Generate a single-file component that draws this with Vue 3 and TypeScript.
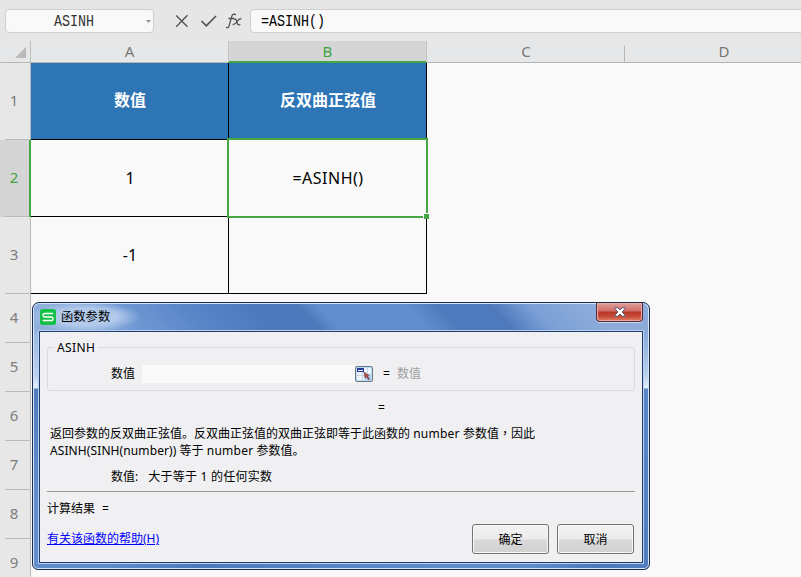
<script setup lang="ts">
import { ref } from 'vue'

interface Row {
  id: number
  height: number
}

const columns: string[] = ['A', 'B', 'C', 'D']
const rows: Row[] = [
  { id: 1, height: 77 },
  { id: 2, height: 77 },
  { id: 3, height: 77 },
  { id: 4, height: 49 },
  { id: 5, height: 49 },
  { id: 6, height: 49 },
  { id: 7, height: 49 },
  { id: 8, height: 49 },
  { id: 9, height: 49 },
]
const cells: string[][] = [
  ['数值', '反双曲正弦值'],
  ['1', '=ASINH()'],
  ['-1', ''],
]
const open = ref(true)
</script>

<template>
  <div class="app">
    <header class="formula-bar">
      <div class="name-box">
        <span class="mono">ASINH</span>
        <svg class="caret" width="5" height="3" viewBox="0 0 5 3"><path d="M0 0h5L2.5 3z" fill="#8f8f8f" /></svg>
      </div>
      <svg class="tools" width="69" height="18" viewBox="0 0 69 18" fill="none" stroke="#505050" stroke-width="1.3">
        <path d="M1.2 3.500l11.300 11.300M12.500 3.200L1.200 14.800" />
        <path d="M26.500 9l4.800 4.800L41 4" stroke-width="1.6" />
        <path d="M61 2.800c-2.200-1.200-3.700-.4-4.300 1.800l-2.400 8.600c-.6 2.200-1.500 2.900-3.300 2.300M53.500 6.500h5.800" stroke-width="1.3" />
        <path d="M58.500 7.300c2.100-1 2.700.1 3.300 2.300.7 2.800 1.300 4 3.600 2.900M66.300 6.800c-2-.3-2.900.8-4.200 2.700-1.400 2.200-2.300 3.300-4.400 3" stroke-width="1.3" />
      </svg>
      <div class="formula"><span class="mono">=ASINH()</span></div>
    </header>

    <div class="col-heads">
      <div class="corner"><svg width="11" height="11" viewBox="0 0 11 11"><path d="M11 0v11H0z" fill="#b9b9b9" /></svg></div>
      <div v-for="c in columns" :key="c" class="col-head" :class="{ active: c === 'B' }">{{ c }}</div>
    </div>

    <div class="sheet">
      <div class="row-heads">
        <div v-for="r in rows" :key="r.id" class="row-head" :class="{ active: r.id === 2 }" :style="{ height: r.height + 'px' }">{{ r.id }}</div>
      </div>
      <div class="grid">
        <template v-for="(line, i) in cells" :key="i">
          <div v-for="(text, j) in line" :key="j" class="cell" :class="{ title: i === 0, selected: i === 1 && j === 1 }">
            <span>{{ text }}</span><i v-if="i === 1 && j === 1" class="handle" />
          </div>
        </template>
      </div>
    </div>

    <section v-if="open" class="dialog">
      <div class="title-bar">
        <svg class="logo" width="16" height="16" viewBox="0 0 16 16">
          <rect width="16" height="16" rx="2.5" fill="#13c147" />
          <path d="M13.200 4.500H4.800Q3 4.500 3 6.200T4.800 8h6.400q1.800 0 1.800 1.800t-1.800 1.700H2.800" fill="none" stroke="#fff" stroke-width="1.400" />
        </svg>
        <span class="caption">函数参数</span>
        <button class="close" @click="open = false">
          <svg width="12" height="10" viewBox="0 0 12 10"><path d="M1 .8h3L6 3 8 .8h3v1L8.200 5 11 8.200v1H8L6 7 4 9.200H1v-1L3.800 5 1 1.800z" fill="#fff" stroke="#58566b" stroke-width="1" /></svg>
        </button>
      </div>
      <div class="client">
        <fieldset class="group">
          <legend>ASINH</legend>
          <div class="param">
            <span class="param-name">数值</span>
            <div class="input" />
            <svg class="picker" width="18" height="16" viewBox="0 0 18 16">
              <rect x=".5" y=".5" width="17" height="15" rx="1.5" fill="#b8dcf3" stroke="#707780" />
              <path d="M2 2h14v12H2z" fill="#edf6ff" />
              <path d="M11 8h5v6H9z" fill="#aacdf0" />
              <path d="M2 9.500h14M7.500 6v8M12.500 2v12" stroke="#c3d2e6" />
              <path d="M2 2h7v4H2z" fill="#293b99" />
              <path d="M3 4.500h5" stroke="#e7eeff" />
              <path d="M9 6l5 3.500-1.700.6 2.200 3-1 .7-2.100-3-1.400 1.200z" fill="#b74a3d" stroke="#743c49" stroke-width=".6" />
            </svg>
            <span class="eq">=</span><span class="hint">数值</span>
          </div>
        </fieldset>
        <div class="result-eq">=</div>
        <div class="description">
          <div>返回参数的反双曲正弦值。反双曲正弦值的双曲正弦即等于此函数的 <b class="word">number</b> 参数值<span class="comma" lang="zh-TW">，</span>因此</div>
          <div><b class="formula-word">ASINH(SINH(number))</b> 等于 <b class="word">number</b> 参数值。</div>
        </div>
        <div class="param-help"><span>数值:</span><span class="help-text">大于等于 1 的任何实数</span></div>
        <div class="answer"><span>计算结果</span><span>=</span></div>
        <footer class="footer">
          <a class="help">有关该函数的帮助(H)</a>
          <div class="actions">
            <button class="btn" @click="open = false">确定</button>
            <button class="btn" @click="open = false">取消</button>
          </div>
        </footer>
      </div>
    </section>
  </div>
</template>

<style>
body { overflow: hidden; }
</style>

<style scoped>
* { box-sizing: border-box; }
.app {
  position: relative;
  width: 801px;
  height: 577px;
  overflow: hidden;
  background: #f9f9f9;
  font-family: 'Noto Sans', 'Noto Sans CJK SC', sans-serif;
}
.formula-bar { display: flex; align-items: flex-start; height: 41px; padding: 9px 0 0 5px; background: #e6e6e6; }
.name-box, .formula { display: flex; align-items: center; height: 24px; border: 1px solid #cfcfcf; background: #f9f9f9; }
.name-box { width: 149px; border-radius: 4px; padding: 0 2px 0 48px; justify-content: space-between; }
.formula { flex: 1; margin-left: 6px; border-right: 0; border-radius: 4px 0 0 4px; padding-left: 10px; }
.mono { font: 13.33px/20px 'Liberation Mono', monospace; transform: translateY(1px) scaleY(1.22); color: #000; white-space: pre; }
.name-box .mono { color: #333; }
.tools { flex: none; margin: 3px 0 0 21px; }
.col-heads { display: flex; height: 22px; background: #e6e7e8; border-bottom: 1px solid #b5b7b5; }
.corner { width: 31px; flex: none; display: flex; align-items: flex-end; justify-content: flex-end; padding: 0 4px 4px 0; border-right: 1px solid #bbc0bb; }
.col-head { position: relative; flex: none; width: 198px; text-align: center; font-size: 15px; line-height: 20px; color: #777; }
.col-head:nth-child(2) { width: 197px; }
.col-head:nth-child(4)::after { content: ''; position: absolute; right: 0; bottom: 0; width: 1px; height: 16px; background: #b5b5b5; }
.col-head.active { width: 199px; background: #d5d5d5; color: #3fa53f; box-shadow: inset 0 -1px #44a744, 0 1px #44a744; border-left: 1px solid #c3c3c3; border-right: 1px solid #c3c3c3; }
.sheet { display: flex; }
.row-heads { width: 31px; height: 514px; flex: none; background: #e7e7e7; border-right: 1px solid #b9bcb9; }
.row-head { display: flex; align-items: center; justify-content: center; padding: 0 2px 3px 0; font-size: 15px; color: #7d7d7d; background: linear-gradient(#bbb, #bbb) right bottom / 25px 1px no-repeat; }
.row-head.active { width: 31px; padding-right: 1px; color: #3fa53f; background-color: #d5d5d5; border-right: 2px solid #44a744; }
.grid { display: grid; grid-template-columns: 198px 198px; grid-template-rows: repeat(3, 77px); }
.cell { position: relative; display: flex; align-items: center; justify-content: center; border-right: 1px solid #000; border-bottom: 1px solid #000; padding-left: 1px; font-size: 16px; color: #000; }
.cell.title { padding-bottom: 4px; background: #2e75b6; color: #fff; font-weight: 700; }
.selected { z-index: 1; letter-spacing: .5px; }
.selected::before { content: ''; position: absolute; inset: -2px -2px -2px -2px; border: 2px solid #44a744; }
.handle { position: absolute; right: -3px; bottom: -3px; width: 6px; height: 6px; background: #44a744; border-left: 1px solid #f9f9f9; border-top: 1px solid #f9f9f9; }

.dialog {
  position: absolute;
  left: 32px;
  top: 302px;
  width: 618px;
  height: 268px;
  border: 1px solid #1a2b4b;
  border-radius: 7px 7px 6px 6px;
  padding: 0 6px 6px;
  font-size: 12px;
  color: #000;
  box-shadow: inset 0 0 0 1px #d5e7fa;
  background:
    radial-gradient(ellipse 56px 15px at 52px 14px, #b3caeb 0, #b3caeb 55%, transparent) left top / 616px 29px no-repeat,
    linear-gradient(48deg, #8fafdd 0, #8fafdd 10%, #6f98d4 17%, #5a86c9 27%, #4d79bc 38%, #4d79bc 45%, #628dcc 48%, #628dcc 62%, #4e79bd 67%, #4e79bd 75%, #7a9fd6 81%, #8dabda 90%) left top / 616px 29px no-repeat,
    linear-gradient(#9ab8e2, #bad0ee 44px, #dcecf8 55px, #dcecf8 57px, transparent 58px) left 28px / 6px 85px no-repeat,
    linear-gradient(#86a9dc, #bad0ee 44px, #dcecf8 55px, #dcecf8 57px, transparent 58px) right 28px / 6px 85px no-repeat,
    linear-gradient(48deg, #628dcc 0, #628dcc 8%, #4e79bd 20%, #628dcc 50%, #628dcc 58%, #4e79bd 66%, #5f8acb 100%);
}
.title-bar { display: flex; align-items: center; height: 28px; padding-left: 1px; }
.logo { margin-right: 5px; }
.caption { line-height: 18px; font-size: 12.3px; }
.close { display: flex; align-items: center; justify-content: center; width: 47px; height: 19px; margin: -9px 0 0 auto; padding: 0 0 0 1px; border: 1px solid #542c3e; border-top: 0; border-radius: 0 0 4px 4px; box-shadow: inset 0 0 0 1px #e9aaa4, 0 1px #c9d9ee; background: linear-gradient(#df9e99, #cf6c64 45%, #b73527 50%, #c74c38 75%, #df816a); }
.client { height: 232px; border: 1px solid #203f70; padding: 8px 7px 0; background: #f0f0f2; box-shadow: 0 0 0 1px #b8cfed; }
.group { height: 51px; margin: 0; padding: 0; border: 1px solid #d2dbe0; border-radius: 3px; min-width: 0; }
.group legend { height: 15px; margin-left: 7px; padding: 0 3px 0 2px; line-height: 16px; letter-spacing: .4px; }
.param { display: flex; align-items: center; height: 19px; margin-top: 9px; padding-left: 63px; }
.param-name { width: 31px; line-height: 16px; }
.input { width: 213px; height: 18px; background: #f9f9f9; }
.picker { flex: none; }
.eq { width: 24px; padding-left: 10px; font-weight: 500; }
.hint { color: #a0a0a0; padding-bottom: 1px; }
.result-eq { height: 34px; padding: 9px 0 0 331px; line-height: 16px; font-weight: 500; }
.description { margin-left: 3px; line-height: 17px; white-space: nowrap; }
.description b { font-weight: 400; }
.word { letter-spacing: .25px; }
.formula-word { letter-spacing: .1px; }
.comma { font-family: 'Noto Sans CJK TC', sans-serif; line-height: 1; }
.param-help { display: flex; gap: 10px; height: 33px; padding: 10px 0 0 64px; line-height: 16px; border-bottom: 1px solid #979b99; }
.help-text { letter-spacing: .25px; }
.answer { display: flex; gap: 7px; height: 32px; padding-top: 9px; line-height: 16px; }
.footer { display: flex; justify-content: space-between; height: 30px; padding-right: 1px; }
.help { color: #0000ff; text-decoration: underline; line-height: 29px; }
.actions { display: flex; gap: 8px; }
.btn { width: 77px; height: 30px; padding: 0 0 1px; border: 1px solid #747474; border-radius: 3px; font: inherit; color: #000; box-shadow: inset 0 0 0 1px #f7f7f7; background: linear-gradient(#f3f3f3, #ebebeb 50%, #d9d9d9 53%, #d1d1d1); }
</style>
